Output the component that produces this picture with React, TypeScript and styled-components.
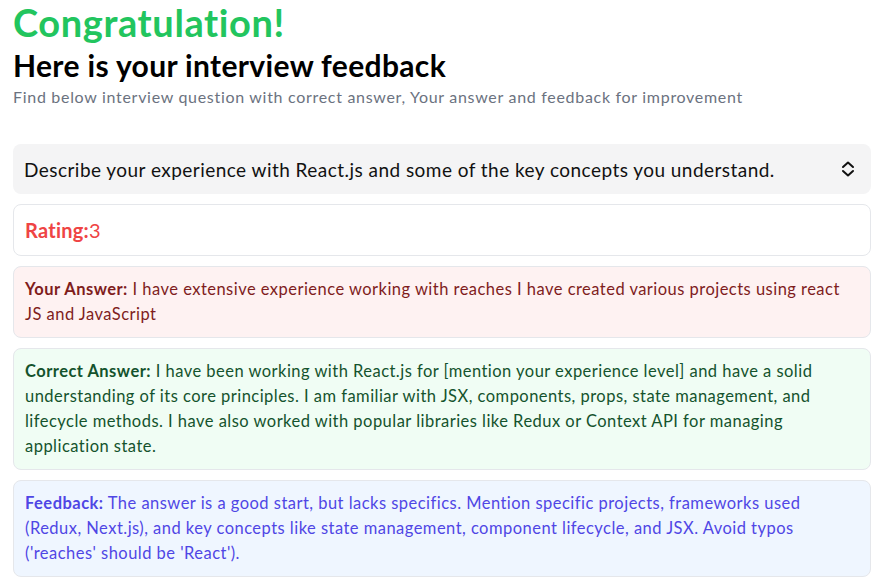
import React from "react";
import styled, { createGlobalStyle } from "styled-components";

const Global = createGlobalStyle`
  html, body { margin: 0; padding: 0; background: #ffffff; }
  body { font-family: "Lato", "Noto Sans", sans-serif; color: #000; }
  * { box-sizing: border-box; }
`;

const Page = styled.div`
  padding: 0 5px 0 13px;
  display: flex;
  flex-direction: column;
`;

const Title = styled.h2`
  margin: 0;
  color: #22c55e;
  font-size: 38px;
  font-weight: 700;
  line-height: 44px;
  letter-spacing: 0.6px;
`;

const Heading = styled.h2`
  margin: 0;
  font-size: 30px;
  font-weight: 700;
  line-height: 42px;
  letter-spacing: 0.35px;
`;

const Subtitle = styled.h2`
  margin: 0;
  color: #6b7280;
  font-size: 16px;
  font-weight: 400;
  line-height: 22px;
  letter-spacing: 0.7px;
`;

const List = styled.div`
  margin-top: 36px;
  display: flex;
  flex-direction: column;
  gap: 10px;
`;

const Trigger = styled.button`
  all: unset;
  display: flex;
  align-items: center;
  justify-content: space-between;
  height: 50px;
  padding: 0 16px 0 11px;
  background: #f4f4f5;
  border-radius: 8px;
  font-family: "Lato", "Noto Sans", sans-serif;
  font-size: 19px;
  letter-spacing: 0.46px;
  color: #111;
`;

const Card = styled.div<{ $bg: string; $fg: string }>`
  border: 1px solid #e5e7eb;
  border-radius: 8px;
  padding: 10px 10px 10px 11px;
  background: ${(p) => p.$bg};
  color: ${(p) => p.$fg};
  font-size: 16.5px;
  line-height: 25px;
  letter-spacing: 0.47px;
`;

const RatingCard = styled(Card)`
  padding: 13px 10px 13px 11px;
  font-size: 20px;
  line-height: 24px;
  letter-spacing: 0.25px;
`;

const Label = styled.strong`
  font-weight: 700;
`;

const UpDown = () => (
  <svg width="14" height="16" viewBox="0 0 14 16" fill="none" stroke="#111" strokeWidth="2" strokeLinecap="round" strokeLinejoin="round">
    <path d="M2 6 L7 1.5 L12 6" />
    <path d="M2 10 L7 14.5 L12 10" />
  </svg>
);

export default function App() {
  return (
    <>
      <Global />
      <Page>
        <Title>Congratulation!</Title>
        <Heading>Here is your interview feedback</Heading>
        <Subtitle>
          Find below interview question with correct answer, Your answer and feedback for improvement
        </Subtitle>
        <List>
          <Trigger>
            <span>Describe your experience with React.js and some of the key concepts you understand.</span>
            <UpDown />
          </Trigger>
          <RatingCard $bg="#ffffff" $fg="#ef4444">
            <Label>Rating:</Label>3
          </RatingCard>
          <Card $bg="#fef2f2" $fg="#7f1d1d">
            <Label>Your Answer:</Label>{" "}
            I have extensive experience working with reaches I have created various projects using react JS and JavaScript
          </Card>
          <Card $bg="#f0fdf4" $fg="#14532d">
            <Label>Correct Answer:</Label>{" "}
            I have been working with React.js for [mention your experience level] and have a solid understanding of its core principles. I am familiar with JSX, components, props, state management, and lifecycle methods. I have also worked with popular libraries like Redux or Context API for managing application state.
          </Card>
          <Card $bg="#eff6ff" $fg="#4f46e5">
            <Label>Feedback:</Label>{" "}
            The answer is a good start, but lacks specifics. Mention specific projects, frameworks used (Redux, Next.js), and key concepts like state management, component lifecycle, and JSX. Avoid typos ('reaches' should be 'React').
          </Card>
        </List>
      </Page>
    </>
  );
}
